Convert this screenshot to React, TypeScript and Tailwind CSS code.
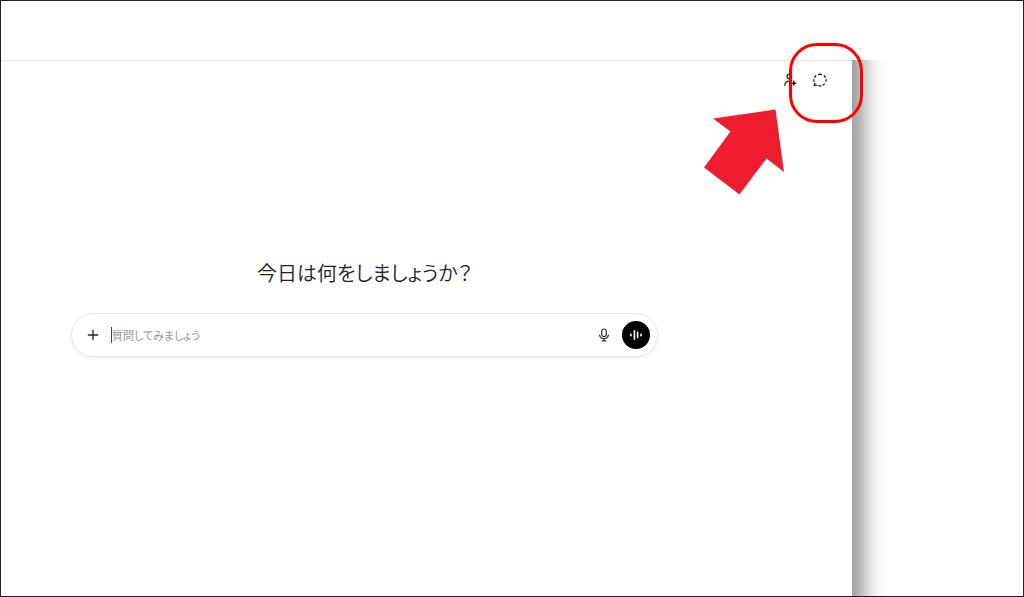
import { Plus } from 'lucide-react';

function TopActions() {
  return (
    <div className="flex items-center justify-end gap-4 pt-3 pr-[25px]">
      <button type="button" aria-label="Add people" className="text-[#222]">
        <svg viewBox="0 0 14 14" className="block h-[14px] w-[14px]" fill="none" stroke="currentColor" strokeWidth="1.2" strokeLinecap="round">
          <circle cx="6.4" cy="3.6" r="2.4" />
          <path d="M1.8 12.4C1.9 9.6 3.6 8.2 6.2 8.2c1 0 1.6.2 2.2.5" />
          <path d="M10.8 8.4v3.6M9 10.2h3.6" strokeWidth="1.6" />
        </svg>
      </button>
      <button type="button" aria-label="Temporary chat" className="text-[#222]">
        <svg viewBox="0 0 14 14" className="block h-[14px] w-[14px]" fill="none" stroke="currentColor" strokeWidth="1.3">
          <path d="M5 1.6a6 6 0 0 1 4 0M10.8 2.5a6 6 0 0 1 1.8 2.2M13.1 6.1a6 6 0 0 1-.3 2.7M11.7 10.7a6 6 0 0 1-1.9 1.5M8.4 12.7a6 6 0 0 1-2.9-.1M3.2 2.5a6 6 0 0 0-1.8 2.2M.9 6.1a6 6 0 0 0 .3 2.7M2.1 10l-.8 2.4h2.9" />
        </svg>
      </button>
    </div>
  );
}

function Composer() {
  return (
    <form
      onSubmit={(e) => e.preventDefault()}
      className="mt-6 flex h-11 w-full items-center rounded-full border border-[#e8e8e8] bg-white pr-[7px] pl-[13px] shadow-[0_2px_4px_rgba(0,0,0,0.06)]"
    >
      <button type="button" aria-label="Add" className="text-[#222]">
        <Plus className="block h-4 w-4" strokeWidth={2} />
      </button>
      <span className="ml-[10px] h-4 w-px bg-[#444]" />
      <input
        type="text"
        aria-label="質問してみましょう"
        placeholder="質問してみましょう"
        className="min-w-0 flex-1 bg-transparent text-[11px] text-[#222] outline-none placeholder:text-[#999]"
      />
      <button type="button" aria-label="Dictate" className="text-[#333]">
        <svg viewBox="0 0 14 14" className="block h-[14px] w-[14px]" fill="none" stroke="currentColor" strokeWidth="1.2" strokeLinecap="round">
          <rect x="4.7" y="1" width="4.6" height="7.6" rx="2.3" />
          <path d="M2.6 7.2a4.5 4.5 0 0 0 8.8 0M7 10.8v2M5.2 12.9h3.6" />
        </svg>
      </button>
      <button type="button" aria-label="Voice mode" className="ml-[11px] flex h-7 w-7 items-center justify-center rounded-full bg-black text-white">
        <svg viewBox="0 0 14 14" className="block h-[14px] w-[14px]" fill="none" stroke="currentColor" strokeWidth="1.6" strokeLinecap="round">
          <path d="M1.9 6.3v1.4M5.4 2.7v8.6M8.6 4.4v5.2M12 6.3v1.4" />
        </svg>
      </button>
    </form>
  );
}

// Red ring and arrow pointing at the temporary chat button
function Callout() {
  return (
    <>
      <div className="pointer-events-none absolute -top-[18px] -right-[11px] h-20 w-[74px] rounded-[28px] border-3 border-[#ff0000]" />
      <svg viewBox="0 0 82 86" className="pointer-events-none absolute top-12 right-[67px] h-[86px] w-[82px]" fill="#ee1c2f">
        <path d="M72.5 0.5 81 63 63.5 49.5 36.5 85.5 1 58.5 27.5 22.5 10 9.5Z" />
      </svg>
    </>
  );
}

export default function App() {
  return (
    <div className="flex min-h-screen flex-col border border-[#222] bg-white font-['Noto_Sans_CJK_JP',sans-serif] [font-feature-settings:'palt']">
      <header className="h-[59px]" />
      <div className="flex flex-1">
        <main className="relative flex-1 border-t border-t-[#f5e4e6] bg-white">
          <TopActions />
          <div className="pt-[170px] pr-[194px] pl-[70px]">
            <h1 className="text-center text-xl leading-8 font-[350] text-[#222]">今日は何をしましょうか？</h1>
            <Composer />
          </div>
          <Callout />
        </main>
        <aside className="w-[171px] bg-[linear-gradient(to_right,#a0a0a0_0px,#b5b5b5_7px,#d8d8d8_15px,#efefef_22px,#fafafa_29px,#ffffff_37px)]" />
      </div>
    </div>
  );
}
